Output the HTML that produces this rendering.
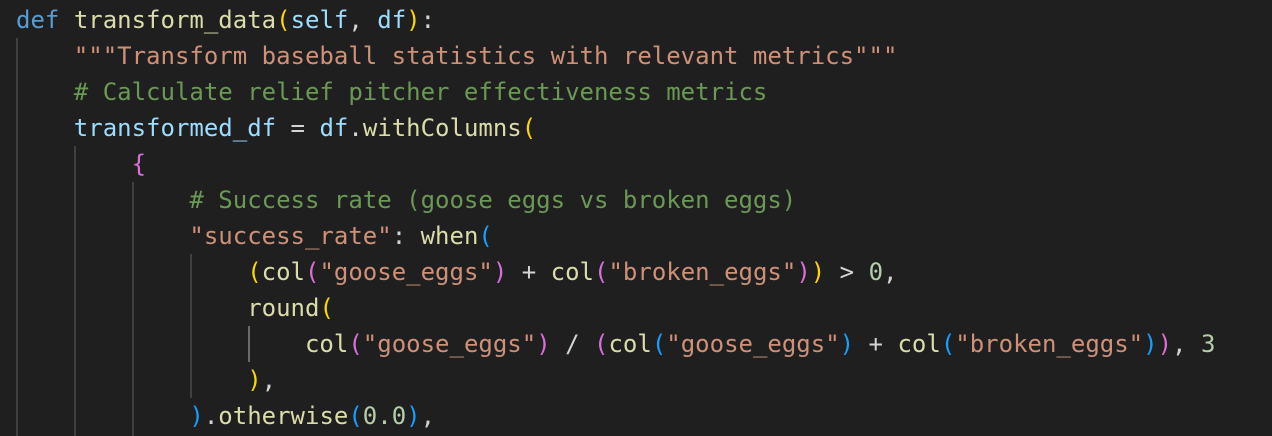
<!DOCTYPE html>
<html><head><style>
html,body{margin:0;padding:0;background:#1f1f1f;width:1272px;height:436px;overflow:hidden}
pre{margin:0;padding:2px 0 0 16px;font-family:"DejaVu Sans Mono","Liberation Mono",monospace;font-size:24px;line-height:36px;color:#d4d4d4;position:relative}
.k{color:#569cd6}.f{color:#dcdcaa}.v{color:#9cdcfe}.s{color:#ce9178}.c{color:#6a9955}.n{color:#b5cea8}
.y{color:#ffd700}.p{color:#da70d6}.b{color:#179fff}
.g{position:absolute;width:2px;background:#404040}
</style></head><body>
<div class="g" style="left:16px;top:38px;height:398px"></div>
<div class="g" style="left:74px;top:146px;height:290px"></div>
<div class="g" style="left:132px;top:182px;height:254px"></div>
<div class="g" style="left:190px;top:254px;height:144px"></div>
<div class="g" style="left:248px;top:326px;height:36px;background:#6a6a6a"></div>
<pre><span class="k">def</span> <span class="f">transform_data</span><span class="y">(</span><span class="v">self</span>, <span class="v">df</span><span class="y">)</span>:
    <span class="s">"""Transform baseball statistics with relevant metrics"""</span>
    <span class="c"># Calculate relief pitcher effectiveness metrics</span>
    <span class="v">transformed_df</span> = <span class="v">df</span>.<span class="f">withColumns</span><span class="y">(</span>
        <span class="p">{</span>
            <span class="c"># Success rate (goose eggs vs broken eggs)</span>
            <span class="s">"success_rate"</span>: <span class="f">when</span><span class="b">(</span>
                <span class="y">(</span><span class="f">col</span><span class="p">(</span><span class="s">"goose_eggs"</span><span class="p">)</span> + <span class="f">col</span><span class="p">(</span><span class="s">"broken_eggs"</span><span class="p">)</span><span class="y">)</span> &gt; <span class="n">0</span>,
                <span class="f">round</span><span class="y">(</span>
                    <span class="f">col</span><span class="p">(</span><span class="s">"goose_eggs"</span><span class="p">)</span> / <span class="p">(</span><span class="f">col</span><span class="b">(</span><span class="s">"goose_eggs"</span><span class="b">)</span> + <span class="f">col</span><span class="b">(</span><span class="s">"broken_eggs"</span><span class="b">)</span><span class="p">)</span>, <span class="n">3</span>
                <span class="y">)</span>,
            <span class="b">)</span>.<span class="f">otherwise</span><span class="b">(</span><span class="n">0.0</span><span class="b">)</span>,
</pre>
</body></html>
